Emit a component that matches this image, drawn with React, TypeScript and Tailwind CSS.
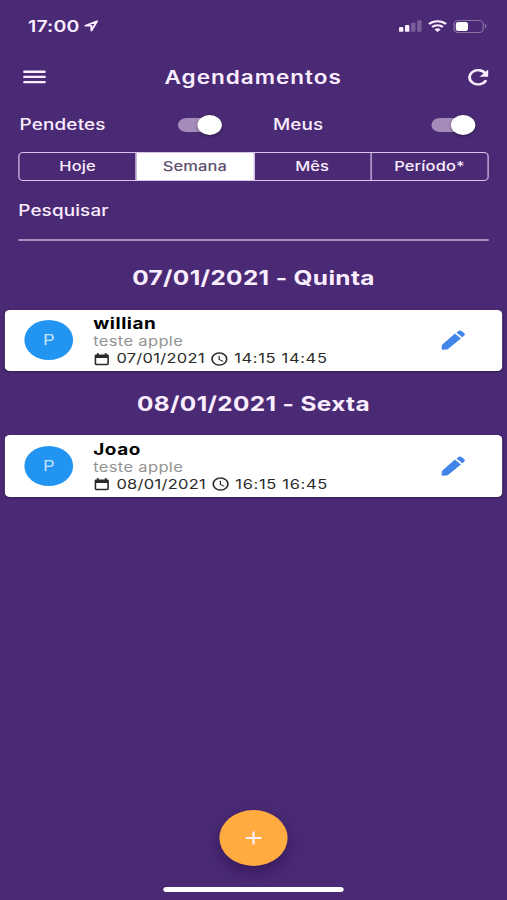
import { useState } from "react";
import { MdAccessTime, MdAdd } from "react-icons/md";

const tabs = ["Hoje", "Semana", "Mês", "Período*"];

const days = [
  {
    title: "07/01/2021 - Quinta",
    name: "willian",
    description: "teste apple",
    date: "07/01/2021",
    hours: "14:15 14:45",
  },
  {
    title: "08/01/2021 - Sexta",
    name: "Joao",
    description: "teste apple",
    date: "08/01/2021",
    hours: "16:15 16:45",
  },
];

const MenuIcon = () => (
  <svg viewBox="0 0 19 14" className="h-[14px] w-[19px]" fill="currentColor">
    <rect x="0" y="0.6" width="18.4" height="2.3" rx="0.4" />
    <rect x="0" y="5.8" width="18.4" height="2.3" rx="0.4" />
    <rect x="0" y="11" width="18.4" height="2.3" rx="0.4" />
  </svg>
);

const RefreshIcon = () => (
  <svg viewBox="0 0 17 17" className="size-[17px]">
    <path
      d="M14.2 4.3A7.1 7.1 0 1 0 14.8 11.3"
      fill="none"
      stroke="currentColor"
      strokeWidth="2.3"
    />
    <path d="M16.6 0.6v7.1h-7.1z" fill="currentColor" />
  </svg>
);

const CalendarIcon = () => (
  <svg viewBox="0 0 14 14" className="h-[14px] w-[13px]">
    <path
      d="M2.6 0.8h1.8v1.4h5.2V0.8h1.8v1.4h0.5c0.8 0 1.4 0.6 1.4 1.4v8.6c0 0.8-0.6 1.4-1.4 1.4H2.1c-0.8 0-1.4-0.6-1.4-1.4V3.6c0-0.8 0.6-1.4 1.4-1.4h0.5zM2.1 5.9v6.3h9.8V5.9z"
      fill="currentColor"
      fillRule="evenodd"
    />
  </svg>
);

const PencilIcon = () => (
  <svg viewBox="0 0 20 20" className="size-5" fill="currentColor">
    <path d="M11.3 3.6 16.2 8.5 5.6 18.9Q5 19.5 4.2 19.5L1.3 19.7Q0.3 19.7 0.3 18.8L0.5 15.7Q0.6 14.9 1.2 14.2z" />
    <path d="M12.5 2.5 14.5 0.8Q15.6 0 16.7 0.9L19 3.2Q20 4.4 19 5.4L17.3 7.3z" />
  </svg>
);

const StatusBar = () => (
  <div className="flex h-[52px] items-center pl-[23px] pr-[17px]">
    <span className="text-[16px] font-semibold tracking-[0.1px]">17:00</span>
    <svg
      viewBox="0 0 12 12"
      className="ml-1 size-3"
      fill="none"
      stroke="currentColor"
      strokeWidth="1.6"
      strokeLinejoin="round"
    >
      <path d="M10.7 1.2 1 5.7h5v4.9z" />
    </svg>
    <div className="ml-auto flex items-center">
      <svg viewBox="0 0 20 12" className="h-3 w-5" fill="currentColor">
        <rect x="0.4" y="7" width="3.6" height="4.8" rx="0.9" />
        <rect x="5.3" y="5" width="3.6" height="6.8" rx="0.9" />
        <rect x="10.3" y="2.7" width="3.6" height="9.1" rx="0.9" opacity="0.27" />
        <rect x="15.3" y="0.2" width="3.6" height="11.6" rx="0.9" opacity="0.27" />
      </svg>
      <svg
        viewBox="0 0 16 12"
        className="ml-1 h-3 w-4"
        fill="none"
        stroke="currentColor"
        strokeWidth="2.1"
      >
        <path d="M1 4.1a10 10 0 0 1 14 0" />
        <path d="M3.6 7.1a6.2 6.2 0 0 1 8.8 0" />
        <path d="M8 12 5.5 9.5a3.6 3.6 0 0 1 5 0z" fill="currentColor" stroke="none" />
      </svg>
      <div className="ml-[5px] flex h-[13px] w-[25px] items-center rounded-[4px] border border-white/35 p-[1.5px]">
        <div className="h-[9px] w-[10px] rounded-[2px] bg-white" />
      </div>
      <div className="ml-px h-1 w-[1.5px] rounded-r-full bg-white/40" />
    </div>
  </div>
);

const Switch = () => {
  const [on, setOn] = useState(true);

  return (
    <button
      onClick={() => setOn((prev) => !prev)}
      className={`flex h-[14px] w-[36px] items-center rounded-full bg-[#a48cba] ${
        on ? "justify-end" : "justify-start"
      }`}
    >
      <span className="size-5 shrink-0 rounded-full bg-white shadow-[0_1px_3px_rgba(0,0,0,0.4)]" />
    </button>
  );
};

const Appointment = ({ item }: { item: (typeof days)[number] }) => (
  <section>
    <h2 className="flex h-[64px] items-center justify-center pt-px text-[20px] font-bold tracking-[0.3px]">
      {item.title}
    </h2>
    <div className="mx-1 flex h-[61.5px] items-center rounded-[4px] bg-white pl-4 pr-[30px] text-black shadow-[0_1px_2px_rgba(0,0,0,0.3)]">
      <div className="flex size-10 items-center justify-center rounded-full bg-[#2294f2] text-[15px] text-[#c4e2fc]">
        P
      </div>
      <div className="ml-[16.5px] pt-[1.5px]">
        <p className="text-[15.5px] font-bold leading-[18px] tracking-[0.45px]">{item.name}</p>
        <p className="text-[13.5px] leading-[17px] tracking-[0.3px] text-[#929292]">
          {item.description}
        </p>
        <p className="flex items-center text-[13.5px] leading-[17px] text-[#2a2a2a]">
          <span className="flex w-[19px] pl-[0.5px]">
            <CalendarIcon />
          </span>
          <span className="tracking-[0.25px]">{item.date}</span>
          <MdAccessTime className="ml-1 size-4" />
          <span className="ml-1 tracking-[0.55px]">{item.hours}</span>
        </p>
      </div>
      <div className="ml-auto text-[#4285e8]">
        <PencilIcon />
      </div>
    </div>
  </section>
);

export default function App() {
  const [activeTab, setActiveTab] = useState("Semana");

  return (
    <div className="h-[900px] w-[507px] overflow-hidden bg-[#4a2a75]">
      {/* 416px wide screen stretched to the full width */}
      <main className="flex h-full w-[416px] origin-left scale-x-[1.21875] flex-col font-['Inter',sans-serif] text-[#fbeeff]">
        <StatusBar />

        <header className="flex h-[50px] items-center pl-[18.5px] pr-[15.5px]">
          <MenuIcon />
          <h1 className="ml-[97.5px] pt-px text-[18.5px] font-semibold tracking-[0.8px]">
            Agendamentos
          </h1>
          <div className="ml-auto">
            <RefreshIcon />
          </div>
        </header>

        <div className="flex h-[45px] items-center pl-4 pr-[26px] text-[15.5px] font-medium">
          <span className="w-[130px] tracking-[0.15px]">Pendetes</span>
          <Switch />
          <span className="ml-[42px] tracking-[0.1px]">Meus</span>
          <div className="ml-auto flex">
            <Switch />
          </div>
        </div>

        <div className="mx-[15px] mt-[5px] flex h-[29px] overflow-hidden rounded-[4px] border border-[#d9c2ec]">
          {tabs.map((tab) => (
            <button
              key={tab}
              onClick={() => setActiveTab(tab)}
              className={`flex-1 border-r border-[#d9c2ec] text-[13.5px] font-medium tracking-[0.1px] last:border-r-0 ${
                activeTab === tab ? "bg-white text-[#5d5070]" : ""
              }`}
            >
              {tab}
            </button>
          ))}
        </div>

        <div className="mx-[15px] flex h-[59.5px] items-center border-b-2 border-[#a98fc4] pt-px text-[15.5px] font-medium tracking-[0.1px]">
          Pesquisar
        </div>

        <div className="pt-[5px]">
          {days.map((item) => (
            <Appointment key={item.date} item={item} />
          ))}
        </div>

        <button className="mx-auto mt-auto flex size-[56px] items-center justify-center rounded-full bg-[#ffab40] shadow-[0_6px_14px_rgba(30,5,60,0.45)]">
          <MdAdd className="size-[22px]" />
        </button>
        <div className="mx-auto mb-2 mt-[21px] h-[5px] w-[148px] shrink-0 rounded-full bg-white" />
      </main>
    </div>
  );
}
